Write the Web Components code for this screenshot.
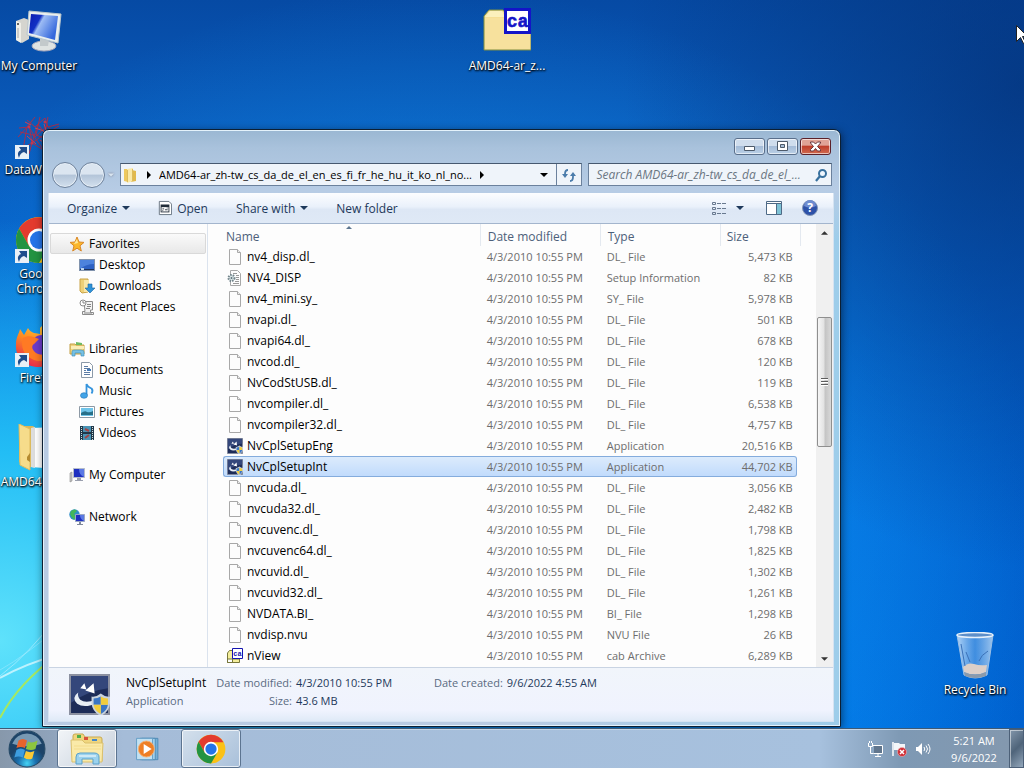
<!DOCTYPE html>
<html lang="en">
<head>
<meta charset="utf-8">
<title>AMD64-ar_zh-tw_cs_da_de_el</title>
<style>
    html, body {
        margin: 0;
        height: 100%;
        overflow: hidden;
    }
    body {
        display: flex;
        flex-direction: column;
        font: 11px/21px "Open Sans", "Noto Sans", sans-serif;
        color: #111;
    }
    desk-top { flex: 1; }
    .col { position: absolute; left: 0; top: 8px; }
    .archive { position: absolute; left: 468px; top: 8px; }
    .bin { position: absolute; right: 10px; top: 632px; }
    explorer-window { position: absolute; left: 42px; top: 129px; bottom: 1px; width: 78%; }
</style>
</head>
<body>
    <desk-top>
        <icon-column class="col">
            <desktop-icon icon="computer">My Computer</desktop-icon>
            <desktop-icon icon="web" shortcut>DataWarrior</desktop-icon>
            <desktop-icon icon="chrome" shortcut>Google Chrome</desktop-icon>
            <desktop-icon icon="firefox" shortcut>Firefox</desktop-icon>
            <desktop-icon icon="openfolder">AMD64-ar_z...</desktop-icon>
        </icon-column>
        <desktop-icon class="archive" icon="cab">AMD64-ar_z...</desktop-icon>
        <desktop-icon class="bin" icon="bin">Recycle Bin</desktop-icon>
        <explorer-window>
            <address-row slot="nav"></address-row>
            <command-bar slot="commands"></command-bar>
            <nav-tree slot="tree"></nav-tree>
            <file-list slot="files"></file-list>
            <details-pane slot="details"></details-pane>
        </explorer-window>
        <mouse-pointer></mouse-pointer>
    </desk-top>
    <task-bar></task-bar>

<script>
// All drawings: [viewBox, markup]
const ICONS = {
    computer: ['0 0 48 48', `
        <defs><linearGradient id="s" x2="1" y2=".5"><stop stop-color="#0b1cb0"/><stop offset=".36" stop-color="#1230c4"/><stop offset=".46" stop-color="#9dbcf4"/><stop offset="1" stop-color="#3568dc"/></linearGradient></defs>
        <path d="M1 13l8-3 5 2v19l-7 4-6-3z" fill="#d5d5cf"/><path d="M1 13l5 2v20l-5-3z" fill="#efefe8"/><circle cx="3" cy="16" r="1" fill="#333"/><path d="M3 20v10" stroke="#aaa"/>
        <ellipse cx="29" cy="38" rx="12" ry="5" fill="#dfe3e2" stroke="#aab"/><path d="M25 30l9 2-1 6h-8z" fill="#c3c9cb"/>
        <path d="M14 3l32 3-3 29-31-8z" fill="#e9efef" stroke="#b9c6cc"/><path d="M16 6l27 2-3 24-26-7z" fill="url(#s)"/>`],
    web: ['0 0 48 48', `
        <g fill="none" stroke="#a5304f" stroke-width="1"><path d="M12 8l8 7 10-9 3 9 11-3M4 16l10-1 6 10 12-11 10 9M3 25l11-12 3 18 13-9 12 12M8 36l9-5 6-19 17 24M14 42l3-11 13 8 8-17M20 5l-8 10-4 23M33 5l-3 17 14-8M5 20l13 3 12 17M25 5l-4 18 15 6"/><path d="M10 10l6 3M20 16l9 3M29 12l4 12M12 24l9 8M25 28l9 6" stroke="#d04050"/></g>
        <g fill="#c03a50"><circle cx="14" cy="15" r="1.500"/><circle cx="30" cy="22" r="1.500"/><circle cx="17" cy="31" r="1.500"/><circle cx="30" cy="10" r="1.500"/></g>`],
    chrome: ['0 0 48 48', `
        <circle cx="24" cy="24" r="23" fill="#fbc116"/>
        <path d="M24 13H43.900A23 23 0 0 0 4.100 12.500L14 30z" fill="#e33b2e"/>
        <path d="M4.100 12.500A23 23 0 0 0 24 47L34 30H24L14 30z" fill="#229342"/>
        <circle cx="24" cy="24" r="11.500" fill="#fff"/><circle cx="24" cy="24" r="9" fill="#2474e8"/>`],
    firefox: ['0 0 48 48', `
        <defs><linearGradient id="f" x1=".8" x2=".3" y2="1"><stop stop-color="#ffd83c"/><stop offset=".5" stop-color="#ff8b20"/><stop offset="1" stop-color="#e8254e"/></linearGradient></defs>
        <path d="M25 8c8-9 10-3 17 6 9 15 0 33-18 33C8 47 0 36 1 24c0-7 3-10 4-15l4 6 4-7c3 6 9 5 12 6z" fill="url(#f)"/>
        <circle cx="27" cy="26" r="11" fill="#6d3bcb"/><path d="M8 18c7-4 12 0 16 1l-5 5c-3 2-2 6 2 9 5 3 12 2 16-3-1 9-10 13-18 10C9 36 5 27 8 18z" fill="#ff7a24"/>`],
    openfolder: ['0 0 48 48', `
        <path d="M4 2h14l4 3h20v38H12L4 38z" fill="#d9b65a"/><path d="M16 4l26-1v42l-26-2z" fill="#fff"/><path d="M16 4l4-1v41l-4-1z" fill="#ddd"/>
        <path d="M4 0l11 5v41L5 41z" fill="#f6dc8b" stroke="#e0bd5e"/><path d="M12 33l3-4v9l-3-2z" fill="#b58b30"/>`],
    cab: ['0 0 48 48', `
        <path d="M1 42V8l5-6h14l4 5h24v35z" fill="#f5de95" stroke="#7e8e45"/><path d="M2 41V10h45v31z" fill="#f7e19d"/><path d="M2 9l5-6h12l3 6z" fill="#fbf0bd"/>
        <rect x="22.500" y="1.500" width="24" height="23" fill="#fff" stroke="#1414c8" stroke-width="3"/>
        <text x="34.500" y="19" text-anchor="middle" font-family="Liberation Mono, monospace" font-weight="bold" font-size="18" fill="#1414c8" stroke="#1414c8" stroke-width=".6">ca</text>`],
    bin: ['0 0 48 48', `
        <defs><linearGradient id="b" x2="1"><stop stop-color="#cfe5fb" stop-opacity=".85"/><stop offset=".5" stop-color="#7db2ea" stop-opacity=".5"/><stop offset="1" stop-color="#c4dcf4" stop-opacity=".8"/></linearGradient></defs>
        <path d="M6 3h36l-6 40q-12 6-23 0z" fill="url(#b)" stroke="#9cc0e6"/><ellipse cx="24" cy="3" rx="18" ry="2.500" fill="#5d8fc9" stroke="#e6f1fb" stroke-width="1.500"/>
        <path d="M12 35q5-5 11-3t13 1l-1 7q-11 5-22 0z" fill="#dccfc8"/><path d="M13 40q11 5 22 0v4q-11 4-21 0z" fill="#8b9aab"/><path d="M10 12l4 22M37 19q-7 4-9 10M15 20l4 10" fill="none" stroke="#3c72b8"/>`],
    star: ['0 0 16 16', `<path d="M8 1l2 5 5 .4-4 3.400 1.300 5.200L8 12.200 3.700 15 5 9.800 1 6.400 6 6z" fill="#fbb62b" stroke="#d98727"/><path d="M8 3l1 4-4 1z" fill="#ffe99a"/>`],
    desktop: ['0 0 16 16', `<rect x=".5" y="2.500" width="15" height="11" fill="#2e62c4" stroke="#8193ad"/><path d="M1 3h14v4Q7 7 1 12z" fill="#4d83dd"/><path d="M1 12h14v1H1z" fill="#1d335c"/><path d="M2 11h3v2H2z" fill="#bcd5ee"/>`],
    downloads: ['0 0 16 16', `<path d="M1 1h8v13l-6 1-2-2z" fill="#eed078" stroke="#c9a346"/><path d="M5 2h5v12H5z" fill="#f8e7a9"/><path d="M9 6h4v4h3l-5 5-5-5h3z" fill="#2f93d8" stroke="#1c67a5" stroke-width=".6"/>`],
    recent: ['0 0 16 16', `<path d="M5 2.500h8.500V11h-2v2.500h3v2H3.500v-3H6z" fill="#f2f2f2" stroke="#8b8b8b"/><circle cx="4" cy="4" r="3" fill="#fff" stroke="#8b8b8b"/><path d="M4 2v2h2M8 5.500h4M8 7.500h4M7 9.500h4M5 14h8" stroke="#858585" fill="none"/>`],
    libraries: ['0 0 16 16', `<path d="M1 3h5l1 1h8v9H1z" fill="#f0d37c" stroke="#c29f45"/><path d="M7 1l6 1v2H7z" fill="#6fba62"/><path d="M2 5h13v3H2z" fill="#fbedb6"/><path d="M3 15v-4q0-2 2-2h7q3 0 3 2v4h-3v-3H6v3z" fill="#76c1e4" stroke="#4692bd" stroke-width=".7"/>`],
    document: ['0 0 16 16', `<path d="M2.500.500h8l3 3v12h-11z" fill="#fff" stroke="#8b99a8"/><path d="M5 4.500h4M5 6.500h6M5 8.500h2M5 10.500h6M5 12.500h6" stroke="#5c7ca5"/><path d="M8 7h4v2H8z" fill="#4379b8"/>`],
    music: ['0 0 16 16', `<path d="M7.500 12V1q1 3 5 4.500 2 2 0 5" fill="none" stroke="#3594dd" stroke-width="1.800"/><ellipse cx="5" cy="12.500" rx="3.500" ry="2.800" fill="#42a4e8" stroke="#2273b5" stroke-width=".6"/>`],
    pictures: ['0 0 16 16', `<path d="M.500 2.500h15v11H.500z" fill="#fff" stroke="#8d99a5"/><path d="M2 4h12v8H2z" fill="#6fc4e9"/><path d="M2 9q4-3 6-1 3 1 6-1v4H2z" fill="#276f88"/>`],
    videos: ['0 0 16 16', `<path d="M1 1h14v14H1z" fill="#21384a"/><path d="M4 1h8v6H4z" fill="#4a93b4"/><path d="M4 9h8v6H4z" fill="#4a93b4"/><path d="M6 4l4 2M6 13l4-3" stroke="#a34646" stroke-width="2"/><path d="M2.500 2v13M13.500 2v13" stroke="#cfe0da" stroke-dasharray="1 1"/>`],
    pc: ['0 0 16 16', `<path d="M1 6l2-1v9l-2 1z" fill="#c7c7c7" stroke="#8a8a8a" stroke-width=".6"/><path d="M4.500 1.500h11v9h-11z" fill="#1e2fc0" stroke="#b5bccb"/><path d="M10 2h5v8q-5-2-5-8z" fill="#5b79e4"/><path d="M8 11h4v2h2v1H6v-1h2z" fill="#9a9fae"/>`],
    network: ['0 0 16 16', `<circle cx="5.500" cy="5.500" r="5.200" fill="#2f8ecb"/><path d="M2 2q4-3 6 0L5 5l2 3-2 3Q2 8 1 5z" fill="#43b65a"/><path d="M6.500 5.500h9v7h-9z" fill="#1e2fc0" stroke="#9ba8c5"/><path d="M11 6h4v6q-4-2-4-6z" fill="#5b79e4"/><path d="M10 13h2v2h2v1H8v-1h2z" fill="#7f889c"/>`],
    blank: ['0 0 16 16', `<path d="M2.500.500h8l3 3v12h-11z" fill="#fdfdfd" stroke="#a8a8a8"/><path d="M10.500.500v3h3" fill="#eee" stroke="#a8a8a8"/>`],
    setup: ['0 0 16 16', `<path d="M3.500.500h7l3 3v12h-10z" fill="#fdfdfd" stroke="#a8a8a8"/><path d="M6 3.500h4M9 5.500h3M9 7.500h3M9 9.500h3M8 11.500h4M6 13.500h6" stroke="#999"/><circle cx="4.500" cy="8" r="3" fill="#dfe9ea" stroke="#73858c" stroke-width="2" stroke-dasharray="1.500 1"/><circle cx="4.500" cy="8" r="1" fill="#5b7078"/>`],
    installer: ['0 0 40 40', `<path d="M1 1h38v38H1z" fill="#1d2c58" stroke="#8b90a0" stroke-width="2"/><path d="M2 2h36v12Q20 16 2 28z" fill="#34477b"/>
        <path d="M11 14l4-5 2 6zM16 16l8-7 1 10z" fill="#fff"/><path d="M9 18q-7 5-1 11 7 5 20-1l-2-3q-10 4-15 0-3-3-2-7z" fill="#e8eef5"/>
        <path d="M31 19q5 4 9 3v7q-1 8-9 12-8-4-9-12v-7q4 1 9-3z" fill="#c9d3dd"/><path d="M31 22v8h-7v-6q4 0 7-2zM31 30h7q-1 6-7 9z" fill="#3b76c4"/><path d="M31 22q3 2 7 2v6h-7zM24 30h7v9q-6-3-7-9z" fill="#f2cd3c"/>`],
    smallcab: ['0 0 16 16', `<path d="M.500 14.500V5l2-2.500h3v12zM.500 14.500h12V11H.500z" fill="#f4ee9b" stroke="#77773a"/><path d="M5.500.500h10v10h-10z" fill="#fff" stroke="#1414b0"/><text x="10.500" y="8" text-anchor="middle" font-family="Liberation Mono, monospace" font-weight="bold" font-size="7" fill="#1414b0">ca</text>`],
    folder: ['0 0 16 16', `<path d="M1 2h6v12l-2 1-4-1z" fill="#eec95e"/><path d="M9 3l4 1v10l-5 1z" fill="#e1b94d"/><path d="M4 2l6-1v13l-6 2z" fill="#fae9a8"/><path d="M4.500 3v12M9.500 2v12" stroke="#dcbb5c"/>`],
    refresh: ['0 0 16 16', `<path d="M4 9V7q0-4 3-4M12 7v3q0 4-3 4" fill="none" stroke="#4b7cab" stroke-width="1.800"/><path d="M1 7h6l-3 4zM9 9h6l-3-4z" fill="#4b7cab"/>`],
    search: ['0 0 16 16', `<circle cx="9.500" cy="6.500" r="3.500" fill="#eff7ff" stroke="#38709e" stroke-width="2"/><path d="M7 9l-4 5" stroke="#38709e" stroke-width="2.200"/>`],
    open: ['0 0 16 16', `<path d="M1.500.500h11l3 3v12h-14z" fill="#fff" stroke="#5d6a78"/><path d="M3 4h10v9H3z" fill="#202b38"/><path d="M4 7h8v5H4z" fill="#fff"/><path d="M5 9h2M8 10h3M5 11h1M10 8h1" stroke="#202b38"/>`],
    views: ['0 0 16 16', `<g fill="none" stroke="#68798f"><path d="M1.500 2.500h3v2h-3zM1.500 7.500h3v2h-3zM1.500 12.500h3v2h-3z"/><path d="M6 3.500h4M11 3.500h4M6 8.500h4M11 8.500h4M6 13.500h4M11 13.500h4"/></g>`],
    pane: ['0 0 16 16', `<path d="M.500 1.500h15v13H.500z" fill="#fff" stroke="#4e6a86"/><path d="M11 4h4v10h-4z" fill="#7ec3d6"/><path d="M1 3.500h14M10.500 3v11" stroke="#4e6a86"/>`],
    help: ['0 0 16 16', `<circle cx="8" cy="8" r="7.500" fill="#2d51a8" stroke="#8496b5"/><path d="M2 6a6 6 0 0 1 12 0q-6 3-12 0z" fill="#6d8bd0"/><text x="8" y="12" text-anchor="middle" font-family="Open Sans, sans-serif" font-weight="bold" font-size="12" fill="#fff">?</text>`],
    start: ['0 0 36 36', `
        <defs><radialGradient id="o" cy=".9"><stop stop-color="#45d3f4"/><stop offset=".5" stop-color="#1a6fae"/><stop offset="1" stop-color="#1c4368"/></radialGradient></defs>
        <circle cx="18" cy="18" r="17" fill="url(#o)" stroke="#264a66"/><path d="M4 13a15 15 0 0 1 28 0q-14 5-28 0z" fill="#a9c7dc" opacity=".65"/>
        <path d="M10 10q4-3 8 0l-2 7q-4-2-8 0z" fill="#e8642c"/><path d="M19 11q4 2 9-1l-2 8q-4 2-9 0z" fill="#8cc63e"/><path d="M8 19q4-3 8 0l-2 7q-4-2-8 0z" fill="#3d9de0"/><path d="M17 20q4 2 8 0l-2 7q-4 2-8-1z" fill="#fbc935"/>`],
    explorer: ['0 0 36 36', `
        <path d="M4 5q0-2 2-2h8l2 3h15q2 0 2 2v22H4z" fill="#f0d67e" stroke="#c8a951"/><path d="M8 4h4v3H8z" fill="#4eae4a"/><path d="M15 6h4v3h-4z" fill="#d9503c"/><path d="M23 8h5v2h-5z" fill="#4488c9"/>
        <path d="M2 9h11l3 3h18l-1 19H3z" fill="#faeaa9" stroke="#dbc06c"/><path d="M5 15h27M5 18h27" stroke="#f3dc8d"/><path d="M7 33v-7q0-4 4-4h14q5 0 5 4v7h-6v-5H13v5z" fill="#9bd2ee" stroke="#5ba1ca"/><path d="M10 25h17" stroke="#fff"/>`],
    media: ['0 0 36 36', `<path d="M10 6h18v24H10z" fill="#76afd5" stroke="#4c87b3"/><path d="M8 6h17v24H8z" fill="#a6d3ec" stroke="#4c87b3"/><path d="M4 6h18v24H4z" fill="#c2e1f2" stroke="#5e9bc4"/><circle cx="15" cy="18" r="9" fill="#ee7f25" stroke="#f5b277"/><path d="M12 12.500l9 5.500-9 5.500z" fill="#fff"/>`],
    plug: ['0 0 16 16', `<g fill="none" stroke="#fff"><path d="M6 4.500h9.500v8h-9M8 15.500h6M11 12.500v3"/><path d="M1.500 2v3.500h4V2M3.500 5.500v7h3M2.500 0v2M4.500 0v2"/></g><path d="M7 5h8v7H7z" fill="#46586c" opacity=".6"/>`],
    flag: ['0 0 16 16', `<path d="M2 1v14" stroke="#fff" stroke-width="1.500"/><path d="M3 2h5l1 1h5v7H9L8 9H3z" fill="#f3f6f9"/><circle cx="11" cy="11" r="4.500" fill="#d02d35" stroke="#efb9bb" stroke-width=".6"/><path d="M9 9l4 4M13 9l-4 4" stroke="#fff" stroke-width="1.500"/>`],
    speaker: ['0 0 16 16', `<path d="M1 6h2l4-4v12l-4-4H1z" fill="#fff"/><path d="M9 6q1.500 2 0 4M11 4.500q3 3.500 0 7M13 3q4 5 0 10" fill="none" stroke="#fff"/>`],
    shortcut: ['0 0 14 14', `<path d="M0 0h14v14H0z" fill="#e9f0f7"/><path d="M4 13Q1 7 6 5L4 2h8v7L9 7q-4 1-5 6z" fill="#1f4d8c"/>`],
    min: ['0 0 13 11', `<path d="M1.500 5.500h10v4h-10z" fill="#fff" stroke="#4d5a6a"/>`],
    max: ['0 0 13 11', `<path d="M1.500.500h10v9h-10z" fill="#fff" stroke="#4d5a6a"/><path d="M4.500 3.500h4v3h-4z" fill="#a9bfd8" stroke="#4d5a6a"/>`],
    close: ['0 0 13 11', `<path d="M1.500 1h3L6.500 3l2-2h3v1L8.500 5.500l3 3V10h-3l-2-2.500L4.500 10h-3V8.500l3-3L1.500 2z" fill="#fff" stroke="#6b3a40"/>`],
    down: ['0 0 8 4', `<path d="M0 0h8L4 4z" fill="currentColor"/>`],
    right: ['0 0 4 8', `<path d="M0 0l4 4-4 4z" fill="currentColor"/>`],
    pointer: ['0 0 12 19', `<path d="M.500.500v16l4-4 3 6 2-1-3-6h5z" fill="#fff" stroke="#222"/>`]
};

const svg = (name, w, h = w) => `<svg width="${w}" height="${h}" viewBox="${ICONS[name][0]}" aria-hidden="true">${ICONS[name][1]}</svg>`;

const BASE = `
    :host, * { box-sizing: border-box; }
    svg { display: block; flex: none; text-shadow: none; }
    button { margin: 0; padding: 0; border: 0; background: none; font: inherit; color: inherit; cursor: default; }
`;

class BaseElement extends HTMLElement {
    connectedCallback() {
        this.attachShadow({ mode: 'open' });
        this.shadowRoot.innerHTML = `<style>${BASE}${this.styles()}</style>${this.markup()}`;
    }
    styles() { return ''; }
    markup() { return '<slot></slot>'; }
}

class DeskTop extends BaseElement {
    styles() {
        return `
            :host { display: block; position: relative; overflow: hidden; min-height: 0;
                background:
                    radial-gradient(ellipse 420px 420px at 0% 88%, #5fe2fb 0%, #22bdf5 45%, rgba(10,150,235,0) 100%),
                    radial-gradient(ellipse 400px 480px at 100% 12%, rgba(4,50,120,.75) 0%, rgba(4,60,140,0) 100%),
                    radial-gradient(ellipse 620px 560px at 42% 75%, #0f93f0 0%, rgba(5,120,232,0) 100%),
                    linear-gradient(100deg, rgba(0,60,160,0) 80%, rgba(0,62,165,.4) 100%),
                    linear-gradient(#064aa4 0%, #0a5bbb 18%, #046bd8 50%, #0078ea 100%); }
            .rays { position: absolute; left: 0; bottom: 0; }
        `;
    }
    markup() {
        return `
            <svg class="rays" width="60" height="130" viewBox="0 0 60 130" aria-hidden="true">
                <g fill="none"><path d="M0 120Q18 85 60 55" stroke="#a6e860" stroke-width="2"/><path d="M0 80Q25 66 60 56" stroke="#d7f8ff" stroke-width="2" opacity=".8"/><path d="M0 78Q30 55 60 15" stroke="#a9ecff" opacity=".8"/><path d="M0 72Q25 58 60 28" stroke="#a9ecff" opacity=".5"/></g>
            </svg>
            <slot></slot>`;
    }
}

class IconColumn extends BaseElement {
    styles() { return ':host { display: grid; grid-auto-rows: 104px; }'; }
}

class DesktopIcon extends BaseElement {
    styles() {
        return `
            :host { display: block; width: 78px; color: #fff; text-align: center; font-size: 12px; line-height: 15px; }
            a { display: flex; flex-direction: column; align-items: center; gap: 2px; color: inherit; text-decoration: none;
                text-shadow: 0 1px 2px #000, 1px 1px 2px #000; }
            .art { position: relative; }
            .mark { position: absolute; left: 0; bottom: 1px; }
        `;
    }
    markup() {
        const mark = this.hasAttribute('shortcut') ? `<span class="mark">${svg('shortcut', 14)}</span>` : '';
        return `<a href="#"><span class="art">${svg(this.getAttribute('icon'), 48)}${mark}</span><span><slot></slot></span></a>`;
    }
}

class ExplorerWindow extends BaseElement {
    styles() {
        return `
            :host { display: flex; flex-direction: column; padding: 0 6px 4px 5px;
                border: 1px solid #0c1f33; border-radius: 7px 7px 0 0;
                box-shadow: inset 0 0 0 1px #e4f2fb, 1px 2px 8px rgba(0,0,0,.5);
                background: linear-gradient(#9ab7d2 0, #a9c2dc 18px, #b7cce5 60px, rgba(184,205,230,0) 110px), linear-gradient(90deg, #b8cbe3 60%, #9dcdea); }
            .title { display: flex; justify-content: flex-end; gap: 2px; height: 33px; padding: 8px 3px 0; }
            .title button { display: flex; align-items: center; justify-content: center; width: 31px; height: 17px;
                border: 1px solid #5a6f8b; border-radius: 3px; box-shadow: inset 0 0 0 1px rgba(255,255,255,.6);
                background: linear-gradient(#cfdded 45%, #a5bcd8 50%, #bad0e6); }
            .title .close { border-color: #5b2029; background: linear-gradient(#e0a396 40%, #c0402c 50%, #d06a50); }
            .client { flex: 1; min-height: 0; display: flex; flex-direction: column; background: #fdfdfd; border: 1px solid #d5e3f2; border-width: 0 1px 1px; }
            .body { flex: 1; min-height: 0; display: flex; }
            slot[name=files] { display: block; flex: 1; min-width: 0; }
        `;
    }
    markup() {
        return `
            <div class="title">
                <button aria-label="Minimize">${svg('min', 13, 11)}</button>
                <button aria-label="Maximize">${svg('max', 13, 11)}</button>
                <button class="close" aria-label="Close">${svg('close', 13, 11)}</button>
            </div>
            <slot name="nav"></slot>
            <div class="client">
                <slot name="commands"></slot>
                <div class="body"><slot name="tree"></slot><slot name="files"></slot></div>
                <slot name="details"></slot>
            </div>`;
    }
}

class AddressRow extends BaseElement {
    styles() {
        return `
            :host { display: flex; align-items: center; gap: 6px; height: 30px; padding: 0 2px 7px 4px; }
            .travel { display: flex; align-items: center; gap: 1px; width: 62px; color: #d9e5f1; }
            .round { flex: none; width: 26px; height: 26px; border: 1px solid #6d819b; border-radius: 50%;
                background: linear-gradient(#dbe5f0 45%, #b4c5d9 52%, #d3e0ee); box-shadow: inset 0 0 0 1px #e7eff7; }
            .pages { display: flex; margin-left: 2px; }
            .travel svg { filter: drop-shadow(0 0 1px #778); }
            .box { display: flex; align-items: center; height: 23px; border: 1px solid #6b819d; border-top-color: #46586f; background: #eff4fa; }
            .address { flex: 460; min-width: 0; gap: 8px; padding-left: 2px; color: #000; }
            .crumb { overflow: hidden; text-overflow: ellipsis; white-space: nowrap; }
            .drop { margin-left: auto; padding: 8px 0; }
            .refresh { height: 100%; padding: 0 4px; border-left: 1px solid #6b819d; }
            .search { flex: 233; min-width: 0; padding: 0 2px 0 7px; }
            input { flex: 1; min-width: 0; border: 0; padding: 0; background: none; outline: 0; font: italic 12px "Open Sans", sans-serif; }
            input::placeholder { color: #6b7682; opacity: 1; }
        `;
    }
    markup() {
        return `
            <div class="travel">
                <button class="round" aria-label="Back"></button>
                <button class="round" aria-label="Forward"></button>
                <button class="pages" aria-label="Recent pages">${svg('down', 6, 4)}</button>
            </div>
            <div class="box address">
                ${svg('folder', 16)}
                ${svg('right', 4, 8)}
                <button class="crumb">AMD64-ar_zh-tw_cs_da_de_el_en_es_fi_fr_he_hu_it_ko_nl_no...</button>
                ${svg('right', 4, 8)}
                <button class="drop" aria-label="Previous locations">${svg('down', 8, 4)}</button>
                <button class="refresh" aria-label="Refresh">${svg('refresh', 16)}</button>
            </div>
            <div class="box search">
                <input type="text" aria-label="Search" placeholder="Search AMD64-ar_zh-tw_cs_da_de_el_...">
                <button aria-label="Go">${svg('search', 16)}</button>
            </div>`;
    }
}

class CommandBar extends BaseElement {
    styles() {
        return `
            :host { display: flex; align-items: center; height: 31px; padding: 0 15px 0 18px; gap: 28px; color: #1e395b;
                font-size: 12px;
                background: linear-gradient(#fcfdff, #eaf1fb 45%, #dde7f5 55%, #dfe9f6); border-bottom: 1px solid #a3b5cd; }
            button { display: flex; align-items: center; gap: 5px; white-space: nowrap; }
            .tools { display: flex; align-items: center; gap: 20px; margin-left: auto; }
            .views { gap: 9px; padding-right: 2px; }
        `;
    }
    markup() {
        return `
            <button>Organize ${svg('down', 8, 4)}</button>
            <button>${svg('open', 14, 16)} Open</button>
            <button>Share with ${svg('down', 8, 4)}</button>
            <button>New folder</button>
            <div class="tools">
                <button class="views" aria-label="Change your view">${svg('views', 16)}${svg('down', 8, 4)}</button>
                <button aria-label="Show the preview pane">${svg('pane', 16)}</button>
                <button aria-label="Get help">${svg('help', 16)}</button>
            </div>`;
    }
}

const TREE = [
    ['star', 'Favorites', [['desktop', 'Desktop'], ['downloads', 'Downloads'], ['recent', 'Recent Places']]],
    ['libraries', 'Libraries', [['document', 'Documents'], ['music', 'Music'], ['pictures', 'Pictures'], ['videos', 'Videos']]],
    ['pc', 'My Computer', []],
    ['network', 'Network', []]
];

class NavTree extends BaseElement {
    styles() {
        return `
            :host { display: block; width: 159px; padding: 9px 1px 0; border-right: 1px solid #dbe3ee; font-size: 12px; }
            section { margin-bottom: 21px; }
            a { display: flex; align-items: center; gap: 4px; height: 21px; padding-left: 18px; color: #000; text-decoration: none; border: 1px solid transparent; }
            a.child { padding-left: 28px; }
            section:first-of-type .root { border-color: #d9d9d9; border-radius: 2px; background: linear-gradient(#fafafa, #e8e8e8); }
        `;
    }
    markup() {
        const link = (icon, text, cls) => `<a href="#" class="${cls}">${svg(icon, 16)}${text}</a>`;
        return TREE.map(([icon, text, kids]) => `
            <section>${link(icon, text, 'root')}${kids.map(([i, t]) => link(i, t, 'child')).join('')}</section>`).join('');
    }
}

const FILES = [
    ['blank', 'nv4_disp.dl_', 'DL_ File', '5,473 KB'],
    ['setup', 'NV4_DISP', 'Setup Information', '82 KB'],
    ['blank', 'nv4_mini.sy_', 'SY_ File', '5,978 KB'],
    ['blank', 'nvapi.dl_', 'DL_ File', '501 KB'],
    ['blank', 'nvapi64.dl_', 'DL_ File', '678 KB'],
    ['blank', 'nvcod.dl_', 'DL_ File', '120 KB'],
    ['blank', 'NvCodStUSB.dl_', 'DL_ File', '119 KB'],
    ['blank', 'nvcompiler.dl_', 'DL_ File', '6,538 KB'],
    ['blank', 'nvcompiler32.dl_', 'DL_ File', '4,757 KB'],
    ['installer', 'NvCplSetupEng', 'Application', '20,516 KB'],
    ['installer', 'NvCplSetupInt', 'Application', '44,702 KB'],
    ['blank', 'nvcuda.dl_', 'DL_ File', '3,056 KB'],
    ['blank', 'nvcuda32.dl_', 'DL_ File', '2,482 KB'],
    ['blank', 'nvcuvenc.dl_', 'DL_ File', '1,798 KB'],
    ['blank', 'nvcuvenc64.dl_', 'DL_ File', '1,825 KB'],
    ['blank', 'nvcuvid.dl_', 'DL_ File', '1,302 KB'],
    ['blank', 'nvcuvid32.dl_', 'DL_ File', '1,261 KB'],
    ['blank', 'NVDATA.BI_', 'BI_ File', '1,298 KB'],
    ['blank', 'nvdisp.nvu', 'NVU File', '26 KB'],
    ['smallcab', 'nView', 'cab Archive', '6,289 KB']
];

class FileList extends BaseElement {
    styles() {
        return `
            :host { display: flex; height: 100%; }
            .pane { flex: 1; min-width: 0; overflow: hidden; padding: 0 19px 0 15px; }
            table { width: 100%; table-layout: fixed; border-collapse: separate; border-spacing: 0; color: #6d6d6d; }
            th, td { padding: 0 0 0 7px; text-align: left; font-weight: normal; white-space: nowrap; }
            th { position: relative; height: 22px; padding-top: 3px; line-height: 19px; color: #4c607a; font-size: 12px; border-left: 1px solid #e4e9f0; }
            th:first-child { padding-left: 3px; border-left: 0; }
            th:last-child { padding-left: 6px; }
            th:last-child::after { content: ""; position: absolute; top: 0; bottom: 0; right: -4px; border-right: 1px solid #e4e9f0; }
            .sort { position: absolute; top: 2px; left: 48%; color: #5d7690; transform: rotate(180deg); }
            .date, .type { width: 120px; }
            .size { width: 77px; }
            td { height: 21px; line-height: 19px; border: 1px solid transparent; border-width: 1px 0; }
            td:first-child { padding-left: 4px; }
            td:last-child { padding: 0 4px 0 0; text-align: right; }
            .name { display: flex; align-items: center; gap: 4px; font-size: 12px; color: #000; }
            .selected td { border-color: #84acdd; background: linear-gradient(#dcebfc, #c1dbfc); }
            .selected td:first-child { border-left-width: 1px; padding-left: 3px; border-radius: 3px 0 0 3px; }
            .selected td:last-child { border-right-width: 1px; padding-right: 3px; border-radius: 0 3px 3px 0; }
        `;
    }
    markup() {
        const rows = FILES.map(([icon, name, type, size]) => `
            <tr${name === 'NvCplSetupInt' ? ' class="selected"' : ''}>
                <td><span class="name">${svg(icon, 16)}${name}</span></td>
                <td>4/3/2010 10:55 PM</td><td>${type}</td><td>${size}</td>
            </tr>`).join('');
        return `
            <div class="pane">
                <table>
                    <thead><tr><th>Name<span class="sort">${svg('down', 6, 3)}</span></th><th class="date">Date modified</th><th class="type">Type</th><th class="size">Size</th></tr></thead>
                    <tbody>${rows}</tbody>
                </table>
            </div>
            <scroll-bar></scroll-bar>`;
    }
}

class ScrollBar extends BaseElement {
    styles() {
        return `
            :host { display: flex; flex-direction: column; width: 17px; background: #f0f0f0; color: #333; }
            .arrow { display: flex; align-items: center; justify-content: center; height: 17px; }
            .up svg { transform: rotate(180deg); }
            .above { flex: 76; }
            .below { flex: 204; }
            .thumb { flex: 129; display: flex; flex-direction: column; align-items: center; justify-content: center; gap: 1px;
                margin: 0 1px; border: 1px solid #8f8f8f; border-radius: 2px; background: linear-gradient(90deg, #f6f6f6, #e3e3e3 45%, #c4c4c4 55%, #d8d8d8); }
            i { width: 7px; height: 2px; background: #5d5d5d; border-bottom: 1px solid #fff; }
        `;
    }
    markup() {
        return `
            <button class="arrow up" aria-label="Scroll up">${svg('down', 7, 4)}</button>
            <div class="above"></div>
            <div class="thumb"><i></i><i></i><i></i></div>
            <div class="below"></div>
            <button class="arrow" aria-label="Scroll down">${svg('down', 7, 4)}</button>`;
    }
}

class DetailsPane extends BaseElement {
    styles() {
        return `
            :host { display: flex; gap: 16px; height: 54px; padding: 6px 20px 0; line-height: 18px; color: #5a6b82;
                border-top: 1px solid #c9d4e3; background: linear-gradient(#f1f5fb, #f0f3fe 80%, #dfeaf7); }
            .facts { display: grid; grid-template-columns: 80px 82px 134px auto 1fr; grid-auto-rows: 18px; column-gap: 4px; white-space: nowrap; font-size: 11px; }
            .label { text-align: right; }
            .value { color: #1e395b; }
            .title { color: #000; font-size: 12px; }
        `;
    }
    markup() {
        return `
            ${svg('installer', 41)}
            <div class="facts">
                <span class="title">NvCplSetupInt</span>
                <span class="label">Date modified:</span><span class="value">4/3/2010 10:55 PM</span>
                <span class="label">Date created:</span><span class="value">9/6/2022 4:55 AM</span>
                <span>Application</span>
                <span class="label">Size:</span><span class="value">43.6 MB</span>
            </div>`;
    }
}

class TaskBar extends BaseElement {
    styles() {
        return `
            :host { display: flex; height: 40px; border-top: 1px solid #3f5a75; box-shadow: inset 0 1px #c5d6e8; color: #fff;
                background: linear-gradient(90deg, #8798ab 0, #8fa3bb 5%, #a5bcd8 12%, #a7c1de 80%, #7e99b4 88%, #8498ae); }
            button { display: flex; align-items: center; justify-content: center; }
            .start { width: 54px; }
            .apps { display: flex; gap: 2px; margin-left: 3px; }
            .apps button { width: 60px; border: 1px solid transparent; border-radius: 3px; }
            .apps .running { border-color: #5c7490; box-shadow: inset 0 0 0 1px rgba(255,255,255,.7); background: linear-gradient(135deg, #d4e0ec, #a9c0da); }
            .apps .active { background: linear-gradient(135deg, #f2f5f8, #c5cfdb); }
            .tray { display: flex; align-items: center; gap: 8px; margin-left: auto; }
            .clock { width: 70px; text-align: center; line-height: 17px; }
            .show { width: 15px; border: 1px solid #4c6078; box-shadow: inset 1px 1px rgba(255,255,255,.5); background: linear-gradient(135deg, #8296ab, #4f647a 50%, #93a7bb); }
        `;
    }
    markup() {
        return `
            <button class="start" aria-label="Start">${svg('start', 38)}</button>
            <div class="apps">
                <button class="running active" aria-label="Windows Explorer">${svg('explorer', 36)}</button>
                <button aria-label="Windows Media Player">${svg('media', 32)}</button>
                <button class="running" aria-label="Google Chrome">${svg('chrome', 30)}</button>
            </div>
            <div class="tray">
                <button aria-label="Network">${svg('plug', 16)}</button>
                <button aria-label="Action Center">${svg('flag', 16)}</button>
                <button aria-label="Volume">${svg('speaker', 16)}</button>
                <time class="clock">5:21 AM<br>9/6/2022</time>
            </div>
            <button class="show" aria-label="Show desktop"></button>`;
    }
}

class MousePointer extends BaseElement {
    styles() { return ':host { position: absolute; right: -4px; top: 25px; }'; }
    markup() { return svg('pointer', 12, 19); }
}

customElements.define('scroll-bar', ScrollBar);
customElements.define('icon-column', IconColumn);
customElements.define('desktop-icon', DesktopIcon);
customElements.define('address-row', AddressRow);
customElements.define('command-bar', CommandBar);
customElements.define('nav-tree', NavTree);
customElements.define('file-list', FileList);
customElements.define('details-pane', DetailsPane);
customElements.define('explorer-window', ExplorerWindow);
customElements.define('mouse-pointer', MousePointer);
customElements.define('desk-top', DeskTop);
customElements.define('task-bar', TaskBar);
</script>
</body>
</html>
